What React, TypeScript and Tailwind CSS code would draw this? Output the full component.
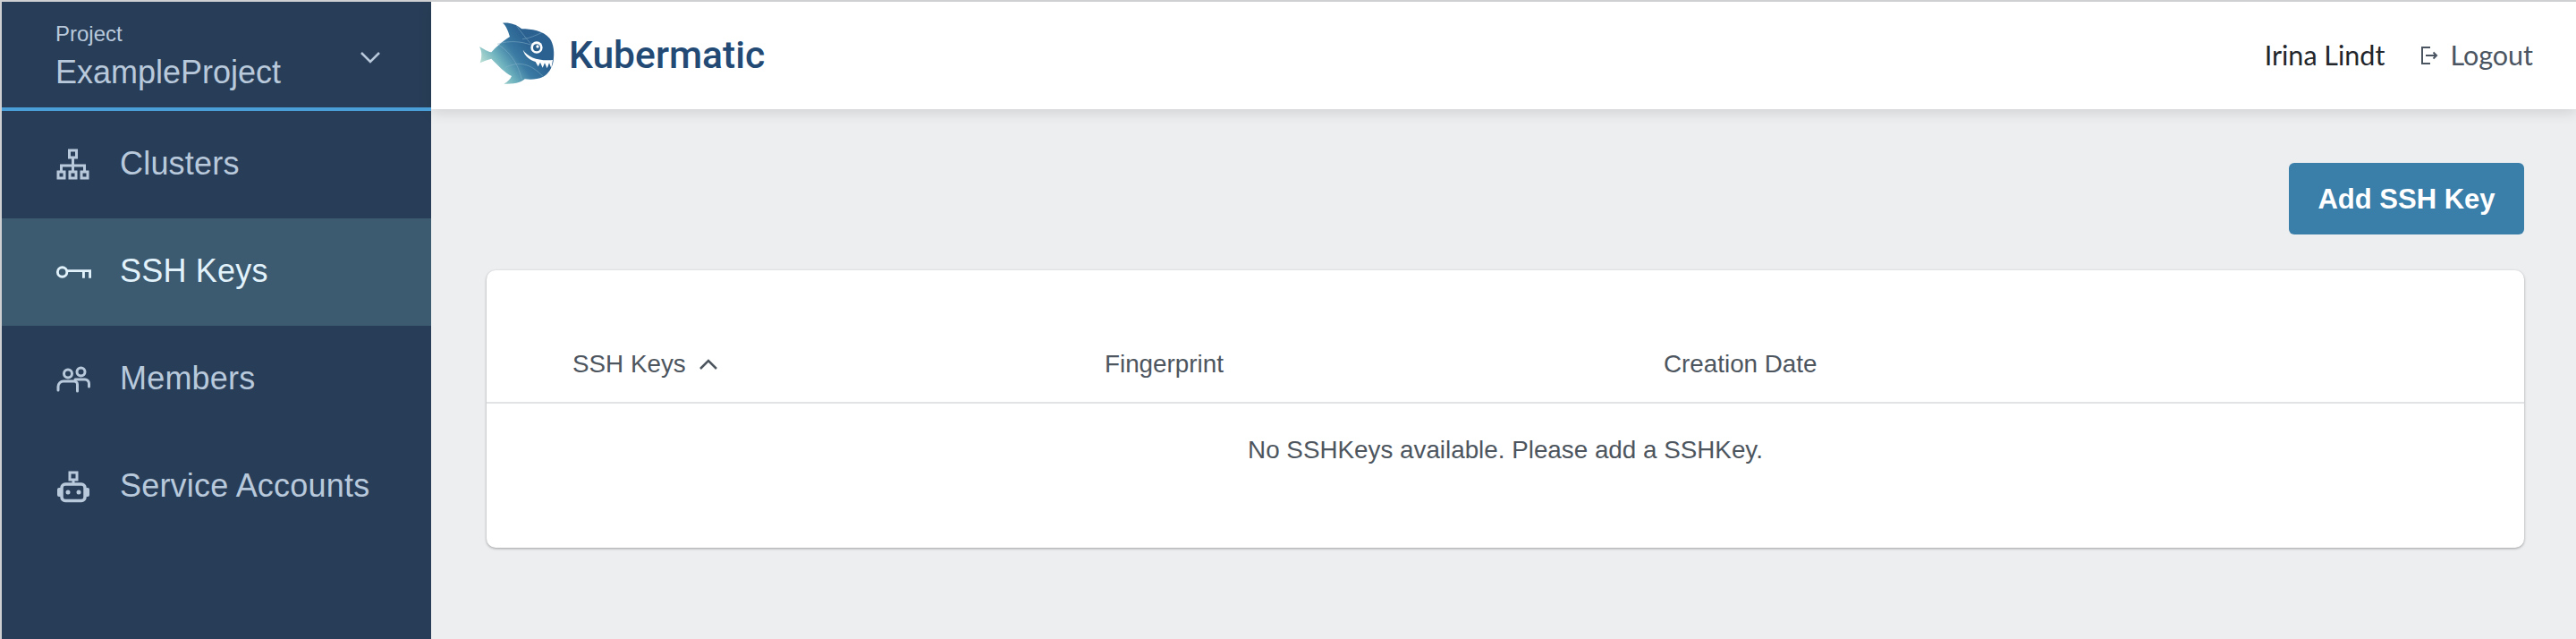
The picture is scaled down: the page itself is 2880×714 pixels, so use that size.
import type { JSX } from "react";

function FishLogo(): JSX.Element {
  return (
    <svg className="w-[120px] h-[90px] shrink-0" viewBox="0 0 360 270">
      <defs>
        <linearGradient id="fishBody" x1="0.08" y1="0.72" x2="0.7" y2="0.35">
          <stop offset="0" stopColor="#b5dcd2" />
          <stop offset="0.3" stopColor="#6fb3bf" />
          <stop offset="0.62" stopColor="#3a7aa3" />
          <stop offset="1" stopColor="#2a6191" />
        </linearGradient>
      </defs>
      <path
        d="M48 106 C62 112 72 122 88 124 C100 112 118 92 150 72 C144 52 138 36 126 26 C150 24 170 30 190 46 C222 46 262 52 284 78 C298 98 300 126 296 154 C292 178 278 198 262 206 C242 216 220 216 200 214 C190 224 170 232 130 230 C144 222 152 214 156 204 C132 192 112 170 88 146 C74 150 62 154 50 160 C56 142 58 124 48 106 Z"
        fill="url(#fishBody)"
      />
      <g fill="none" stroke="#8fb8cf" strokeWidth="2" opacity="0.7">
        <path d="M110 96 C150 84 190 88 222 100" />
        <path d="M170 32 C190 60 204 76 222 98" />
        <path d="M108 96 C160 130 178 170 190 214" />
        <path d="M134 176 C180 152 220 162 262 206" />
        <path d="M258 58 C240 66 216 78 192 80" />
      </g>
      <circle cx="240" cy="108" r="20" fill="#ffffff" />
      <circle cx="240" cy="109" r="12" fill="#2a5f8c" />
      <circle cx="243" cy="105" r="5" fill="#ffffff" />
      <path
        d="M194 116 C212 142 246 154 294 150 L289 178 L282 160 L275 178 L267 160 L260 176 L252 158 L245 172 L236 156 C218 150 200 138 194 116 Z"
        fill="#ffffff"
      />
    </svg>
  );
}

function ClusterIcon(): JSX.Element {
  return (
    <svg className="w-[38px] h-[36px]" viewBox="0 0 38 36" fill="none" stroke="currentColor" strokeWidth="3">
      <rect x="14.5" y="2" width="8" height="8" />
      <path d="M18.5 10v8M5.5 26v-7h26v7M18.5 18v8" />
      <rect x="2" y="26" width="7" height="7" />
      <rect x="15" y="26" width="7" height="7" />
      <rect x="28" y="26" width="7" height="7" />
    </svg>
  );
}

function KeyIcon(): JSX.Element {
  return (
    <svg className="w-[42px] h-[18px]" viewBox="0 0 42 18" fill="none" stroke="currentColor" strokeWidth="3">
      <circle cx="8" cy="9" r="5.5" />
      <path d="M13.5 7.5H40.5V16M33 8v8" />
    </svg>
  );
}

function MembersIcon(): JSX.Element {
  return (
    <svg className="w-[38px] h-[30px]" viewBox="0 0 38 30" fill="none" stroke="currentColor" strokeWidth="3" strokeLinecap="round">
      <circle cx="13" cy="8.5" r="4.5" />
      <circle cx="27.5" cy="6.5" r="4.5" />
      <path d="M2 27v-4a6 6 0 0 1 6-6h12a3.500 3.500 0 0 1 3.500 3.500V28" />
      <path d="M21 15h11a4.500 4.500 0 0 1 4.500 4.500V23" />
    </svg>
  );
}

function RobotIcon(): JSX.Element {
  return (
    <svg className="w-[38px] h-[36px]" viewBox="0 0 38 36" fill="none">
      <rect x="15" y="2" width="8" height="8" stroke="currentColor" strokeWidth="3" />
      <path d="M19 10v5" stroke="currentColor" strokeWidth="3" />
      <rect x="6" y="15" width="26" height="18.500" rx="4" stroke="currentColor" strokeWidth="3.500" />
      <rect x="1" y="19" width="5" height="10" rx="2" fill="currentColor" />
      <rect x="32" y="19" width="5" height="10" rx="2" fill="currentColor" />
      <circle cx="13" cy="24" r="2.500" fill="currentColor" />
      <circle cx="25" cy="24" r="2.500" fill="currentColor" />
    </svg>
  );
}

function LogoutIcon(): JSX.Element {
  return (
    <svg className="w-[20px] h-[22px]" viewBox="0 0 20 22" fill="none" stroke="#4a5561" strokeWidth="2">
      <path d="M11 2H2v18h9" />
      <path d="M6 11h12M14.500 7.500 18 11l-3.500 3.500" />
    </svg>
  );
}

type NavItemProps = {
  label: string;
  icon: JSX.Element;
  active?: boolean;
};

function NavItem({ label, icon, active }: NavItemProps): JSX.Element {
  return (
    <div
      className={
        active
          ? "flex items-center h-[120px] bg-[#3c5a70] text-[#e2f2fb]"
          : "flex items-center h-[120px] text-[#b9c9dc]"
      }
    >
      <div className="flex items-center justify-center w-[40px] ml-[60px] mr-[32px]">{icon}</div>
      <span className="text-[36px] tracking-[0.2px] pb-[2px]">{label}</span>
    </div>
  );
}

function Sidebar(): JSX.Element {
  return (
    <aside className="flex flex-col w-[480px] shrink-0 bg-[#283e58]">
      <div className="relative flex flex-col h-[122px] pl-[60px] pt-[20px] border-b-[4px] border-[#4a9fd8] text-[#b9c9dc]">
        <span className="text-[24px] leading-[32px]">Project</span>
        <span className="text-[36px] leading-[46px] mt-[4px]">ExampleProject</span>
        <svg className="absolute right-[56px] top-[54px] w-[24px] h-[16px]" viewBox="0 0 24 16" fill="none" stroke="currentColor" strokeWidth="2.500">
          <path d="M2 3l10 10L22 3" />
        </svg>
      </div>
      <NavItem label="Clusters" icon={<ClusterIcon />} />
      <NavItem label="SSH Keys" icon={<KeyIcon />} active />
      <NavItem label="Members" icon={<MembersIcon />} />
      <NavItem label="Service Accounts" icon={<RobotIcon />} />
    </aside>
  );
}

function Header(): JSX.Element {
  return (
    <header className="flex items-center justify-between h-[120px] pl-[38px] pr-[48px] bg-white shadow-[0_4px_14px_rgba(0,0,0,0.12)]">
      <div className="flex items-center gap-[2px]">
        <FishLogo />
        <span className="-ml-[6px] font-['Roboto',sans-serif] font-medium text-[42.6px] text-[#234a75]">Kubermatic</span>
      </div>
      <div className="flex items-center font-['Lato',sans-serif] text-[30.5px]">
        <span className="text-[#22262b]">Irina Lindt</span>
        <div className="ml-[40px] mr-[13px]">
          <LogoutIcon />
        </div>
        <span className="text-[#4a5561]">Logout</span>
      </div>
    </header>
  );
}

function KeysTable(): JSX.Element {
  return (
    <section className="h-[310px] bg-white rounded-[10px] shadow-[0_1px_3px_rgba(0,0,0,0.35)] text-[27.8px] text-[#4d555e]">
      <div className="grid grid-cols-[595px_625px_1fr] items-center h-[149px] pt-[62px] pl-[96px] border-b-2 border-[#e2e3e5]">
        <div className="flex items-center gap-[14px]">
          <span>SSH Keys</span>
          <svg className="w-[22px] h-[14px]" viewBox="0 0 22 14" fill="none" stroke="currentColor" strokeWidth="2.500">
            <path d="M2 12l9-9 9 9" />
          </svg>
        </div>
        <span>Fingerprint</span>
        <span>Creation Date</span>
      </div>
      <p className="pt-[31px] text-center">No SSHKeys available. Please add a SSHKey.</p>
    </section>
  );
}

export default function App(): JSX.Element {
  return (
    <div className="flex h-[714px] overflow-hidden border-t-2 border-l-2 border-[#cfd0d2] bg-[#edeef0] font-['Liberation_Sans',sans-serif]">
      <Sidebar />
      <div className="flex flex-col flex-1">
        <Header />
        <main className="flex flex-col items-end pt-[60px] pl-[62px] pr-[58px]">
          <button className="w-[263px] h-[80px] pt-[2px] bg-[#3a7eaa] rounded-[6px] text-white font-bold text-[31px]">
            Add SSH Key
          </button>
          <div className="w-full mt-[40px]">
            <KeysTable />
          </div>
        </main>
      </div>
    </div>
  );
}
